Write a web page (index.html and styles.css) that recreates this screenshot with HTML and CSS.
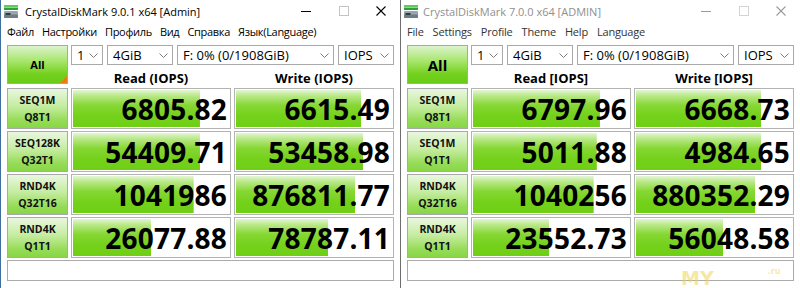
FILE: index.html
```html
<!DOCTYPE html>
<html>
<head>
<meta charset="utf-8">
<link rel="stylesheet" href="styles.css">
</head>
<body>
<div class="win win-a">
  <div class="titlebar">
    <svg class="appicon" width="14" height="13" viewBox="0 0 14 13">
      <rect x="0" y="0" width="14" height="2" fill="#5ccc5c"/>
      <rect x="0" y="2.5" width="14" height="2.5" fill="#2e9e3e"/>
      <rect x="0" y="6" width="14" height="7" rx="1" fill="#9aa6ad"/>
      <rect x="0" y="9.5" width="14" height="3.5" rx="1" fill="#6f7c84"/>
      <rect x="1.5" y="8" width="5" height="2" fill="#2f3b42"/>
    </svg>
    <span class="title">CrystalDiskMark 9.0.1 x64 [Admin]</span>
    <div class="controls">
      <span class="ctl"><svg width="10" height="10" viewBox="0 0 10 10"><line x1="0" y1="5.5" x2="10" y2="5.5" stroke="#000" stroke-width="1"/></svg></span>
      <span class="ctl"><svg width="10" height="10" viewBox="0 0 10 10"><rect x="0.5" y="0.5" width="9" height="9" fill="none" stroke="#c4c4c4" stroke-width="1"/></svg></span>
      <span class="ctl"><svg width="10" height="10" viewBox="0 0 10 10"><path d="M0.5 0.5 L9.5 9.5 M9.5 0.5 L0.5 9.5" stroke="#000" stroke-width="1.1"/></svg></span>
    </div>
  </div>
  <div class="menubar">
    <span>Файл</span><span>Настройки</span><span>Профиль</span><span>Вид</span><span>Справка</span><span>Язык(Language)</span>
  </div>
  <div class="client">
    <div class="grid">
      <div class="allbtn all-a">All<span class="corner"></span></div>
      <div class="toolbar">
        <div class="combo cb-n"><span>1</span><svg class="chev" width="9" height="5" viewBox="0 0 9 5"><polyline points="0.5,0.5 4.5,4.5 8.5,0.5" fill="none" stroke="#7a7a7a" stroke-width="1"/></svg></div>
        <div class="combo cb-size"><span>4GiB</span><svg class="chev" width="9" height="5" viewBox="0 0 9 5"><polyline points="0.5,0.5 4.5,4.5 8.5,0.5" fill="none" stroke="#7a7a7a" stroke-width="1"/></svg></div>
        <div class="combo cb-drive"><span>F: 0% (0/1908GiB)</span><svg class="chev" width="9" height="5" viewBox="0 0 9 5"><polyline points="0.5,0.5 4.5,4.5 8.5,0.5" fill="none" stroke="#7a7a7a" stroke-width="1"/></svg></div>
        <div class="combo cb-unit"><span>IOPS</span><svg class="chev" width="9" height="5" viewBox="0 0 9 5"><polyline points="0.5,0.5 4.5,4.5 8.5,0.5" fill="none" stroke="#7a7a7a" stroke-width="1"/></svg></div>
      </div>
      <div class="hdr">Read (IOPS)</div>
      <div class="hdr">Write (IOPS)</div>

      <div class="lbl"><span>SEQ1M</span><span>Q8T1</span></div>
      <div class="val" style="--p:81%">6805.82</div>
      <div class="val" style="--p:80%">6615.49</div>

      <div class="lbl"><span>SEQ128K</span><span>Q32T1</span></div>
      <div class="val" style="--p:81%">54409.71</div>
      <div class="val" style="--p:81%">53458.98</div>

      <div class="lbl"><span>RND4K</span><span>Q32T16</span></div>
      <div class="val" style="--p:77%">1041986</div>
      <div class="val" style="--p:76%">876811.77</div>

      <div class="lbl"><span>RND4K</span><span>Q1T1</span></div>
      <div class="val" style="--p:50%">26077.88</div>
      <div class="val" style="--p:59%">78787.11</div>

      <div class="comment"></div>
    </div>
  </div>
</div>
<div class="sep"></div>
<div class="win win-b">
  <div class="titlebar">
    <svg class="appicon" width="14" height="13" viewBox="0 0 14 13">
      <rect x="0" y="0" width="14" height="2" fill="#5ccc5c"/>
      <rect x="0" y="2.5" width="14" height="2.5" fill="#2e9e3e"/>
      <rect x="0" y="6" width="14" height="7" rx="1" fill="#9aa6ad"/>
      <rect x="0" y="9.5" width="14" height="3.5" rx="1" fill="#6f7c84"/>
      <rect x="1.5" y="8" width="5" height="2" fill="#2f3b42"/>
    </svg>
    <span class="title">CrystalDiskMark 7.0.0 x64 [ADMIN]</span>
    <div class="controls">
      <span class="ctl"><svg width="10" height="10" viewBox="0 0 10 10"><line x1="0" y1="5.5" x2="10" y2="5.5" stroke="#9a9a9a" stroke-width="1"/></svg></span>
      <span class="ctl"><svg width="10" height="10" viewBox="0 0 10 10"><rect x="0.5" y="0.5" width="9" height="9" fill="none" stroke="#d4d4d4" stroke-width="1"/></svg></span>
      <span class="ctl"><svg width="10" height="10" viewBox="0 0 10 10"><path d="M0.5 0.5 L9.5 9.5 M9.5 0.5 L0.5 9.5" stroke="#9a9a9a" stroke-width="1.1"/></svg></span>
    </div>
  </div>
  <div class="menubar menubar-b">
    <span>File</span><span>Settings</span><span>Profile</span><span>Theme</span><span>Help</span><span>Language</span>
  </div>
  <div class="client">
    <div class="grid">
      <div class="allbtn all-b">All</div>
      <div class="toolbar">
        <div class="combo cb-n"><span>1</span><svg class="chev" width="9" height="5" viewBox="0 0 9 5"><polyline points="0.5,0.5 4.5,4.5 8.5,0.5" fill="none" stroke="#7a7a7a" stroke-width="1"/></svg></div>
        <div class="combo cb-size"><span>4GiB</span><svg class="chev" width="9" height="5" viewBox="0 0 9 5"><polyline points="0.5,0.5 4.5,4.5 8.5,0.5" fill="none" stroke="#7a7a7a" stroke-width="1"/></svg></div>
        <div class="combo cb-drive"><span>F: 0% (0/1908GiB)</span><svg class="chev" width="9" height="5" viewBox="0 0 9 5"><polyline points="0.5,0.5 4.5,4.5 8.5,0.5" fill="none" stroke="#7a7a7a" stroke-width="1"/></svg></div>
        <div class="combo cb-unit"><span>IOPS</span><svg class="chev" width="9" height="5" viewBox="0 0 9 5"><polyline points="0.5,0.5 4.5,4.5 8.5,0.5" fill="none" stroke="#7a7a7a" stroke-width="1"/></svg></div>
      </div>
      <div class="hdr">Read [IOPS]</div>
      <div class="hdr">Write [IOPS]</div>

      <div class="lbl"><span>SEQ1M</span><span>Q8T1</span></div>
      <div class="val" style="--p:81%">6797.96</div>
      <div class="val" style="--p:80%">6668.73</div>

      <div class="lbl"><span>SEQ1M</span><span>Q1T1</span></div>
      <div class="val" style="--p:79%">5011.88</div>
      <div class="val" style="--p:80%">4984.65</div>

      <div class="lbl"><span>RND4K</span><span>Q32T16</span></div>
      <div class="val" style="--p:77%">1040256</div>
      <div class="val" style="--p:76%">880352.29</div>

      <div class="lbl"><span>RND4K</span><span>Q1T1</span></div>
      <div class="val" style="--p:49%">23552.73</div>
      <div class="val" style="--p:56%">56048.58</div>

      <div class="comment"></div>
    </div>
  </div>
  <div class="wm">MY<span class="wm-ru">.ru</span></div>
</div>
</body>
</html>
```

FILE: styles.css
```css
* { box-sizing: border-box; }
html, body { margin: 0; padding: 0; }
body {
  width: 800px;
  height: 288px;
  overflow: hidden;
  display: flex;
  background: #ffffff;
  font-family: "Open Sans", "Noto Sans", sans-serif;
  color: #000;
}

.win {
  position: relative;
  display: flex;
  flex-direction: column;
  background: #ffffff;
  height: 288px;
}
.win-a { width: 400px; border-left: 1px solid #3f6f9f; }
.sep { width: 1px; background: #6e6e6e; }
.win-b { flex: 1; }

.titlebar {
  height: 22px;
  display: flex;
  align-items: center;
}
.appicon { margin-left: 3px; flex: none; }
.title {
  margin-left: 7px;
  font-size: 11px;
  color: #000;
  white-space: nowrap;
}
.win-b .title { margin-left: 5px; color: #8f8f8f; }
.controls { margin-left: auto; display: flex; height: 100%; }
.ctl {
  width: 37.5px;
  display: flex;
  align-items: center;
  justify-content: center;
}

.menubar {
  height: 19px;
  display: flex;
  align-items: center;
  gap: 8px;
  padding-left: 6px;
  font-size: 11px;
  letter-spacing: -0.3px;
  white-space: nowrap;
}
.menubar-b { gap: 9px; letter-spacing: -0.2px; color: #333; }

.client { padding: 4px 0 0 6px; }

.grid {
  display: grid;
  grid-template-columns: 61px 160px 160px;
  grid-template-rows: 20px 19px 41px 41px 41px 41px 21px;
  column-gap: 3px;
  row-gap: 2px;
}

.allbtn {
  position: relative;
  grid-column: 1;
  grid-row: 1 / 3;
  height: 39px;
  border: 1px solid #a8a8a8;
  background: linear-gradient(180deg, #dcf3cd 0%, #a8e66e 40%, #74d11f 75%, #68cc14 100%);
  display: flex;
  align-items: center;
  justify-content: center;
  font-weight: 700;
  font-size: 11px;
}
.all-b { font-size: 15px; }
.corner {
  position: absolute;
  right: 0;
  bottom: 0;
  width: 0;
  height: 0;
  border-left: 7px solid transparent;
  border-bottom: 7px solid #f07a10;
}

.toolbar {
  grid-column: 2 / 4;
  grid-row: 1;
  display: flex;
  gap: 4px;
}
.combo {
  height: 20px;
  border: 1px solid #a9a9a9;
  background: #fff;
  display: flex;
  align-items: center;
  justify-content: space-between;
  padding: 0 4px 0 5px;
  font-size: 13px;
  white-space: nowrap;
}
.cb-n { width: 32px; }
.cb-size { width: 66px; }
.cb-drive { flex: 1; }
.cb-unit { width: 56px; }
.chev { flex: none; }

.hdr {
  grid-row: 2;
  display: flex;
  align-items: flex-end;
  justify-content: center;
  font-weight: 700;
  font-size: 13px;
  line-height: 16px;
}

.lbl {
  border: 1px solid #a9a9a9;
  background: linear-gradient(180deg, #e9f7e0 0%, #c4ec9f 45%, #97dc58 80%, #88d646 100%);
  display: flex;
  flex-direction: column;
  align-items: center;
  justify-content: center;
  font-weight: 700;
  font-size: 10.5px;
  line-height: 17px;
  color: #111;
}

.val {
  border: 1px solid #b3b3b3;
  box-shadow: inset 0 0 0 1px #fff;
  background-color: #fff;
  background-image: linear-gradient(180deg, #eaf8e0 0%, #b8e886 18%, #86d733 42%, #74d11a 70%, #6ecf14 100%);
  background-repeat: no-repeat;
  background-size: var(--p) 100%;
  display: flex;
  align-items: center;
  justify-content: flex-end;
  padding-right: 3px;
  font-weight: 700;
  font-size: 28px;
  line-height: 1;
  letter-spacing: 0.2px;
}

.comment {
  grid-column: 1 / 4;
  border: 1px solid #ababab;
  background: #fff;
}

.wm {
  position: absolute;
  left: 280px;
  top: 262px;
  font-family: "DejaVu Sans", sans-serif;
  font-weight: 700;
  font-size: 19px;
  line-height: 19px;
  color: rgba(238, 212, 80, 0.55);
  white-space: nowrap;
}
.wm-ru {
  margin-left: 54px;
  vertical-align: 11px;
  font-size: 8px;
  color: rgba(238, 212, 80, 0.5);
}
```
